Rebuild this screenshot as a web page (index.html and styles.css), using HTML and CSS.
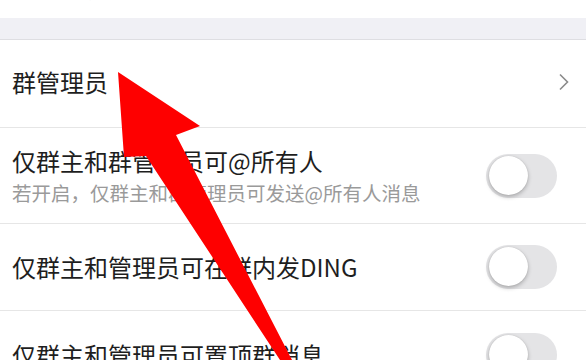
FILE: index.html
```html
<!DOCTYPE html>
<html lang="zh-CN">
<head>
<meta charset="utf-8">
<link rel="stylesheet" href="styles.css">
</head>
<body>
<div class="page">
  <div class="top"><span class="top-text">开启后，新成员入群可查看最近100条聊天记录</span></div>
  <div class="gap"></div>
  <div class="row row-1">
    <div class="title">群管理员</div>
    <svg class="chevron" width="12" height="18" viewBox="0 0 12 18"><path d="M2 1.5 L9.5 9 L2 16.5" fill="none" stroke="#8a8a8a" stroke-width="1.6"/></svg>
  </div>
  <div class="row row-2">
    <div class="texts">
      <div class="title">仅群主和群管理员可@所有人</div>
      <div class="sub">若开启，仅群主和群管理员可发送@所有人消息</div>
    </div>
    <div class="switch"><div class="knob"></div></div>
  </div>
  <div class="row row-3">
    <div class="title">仅群主和管理员可在群内发DING</div>
    <div class="switch"><div class="knob"></div></div>
  </div>
  <div class="row row-4">
    <div class="title">仅群主和管理员可置顶群消息</div>
    <div class="switch"><div class="knob"></div></div>
  </div>
  <svg class="arrow" width="586" height="360" viewBox="0 0 586 360">
    <polygon points="118,72 200,126 176,135 292,360 280,360 146,156 124,157" fill="#fe0000"/>
  </svg>
</div>
</body>
</html>
```
FILE: styles.css
```css
* { box-sizing: border-box; }
html, body { margin: 0; padding: 0; background: #fff; }
body { font-family: "Noto Sans CJK SC", "Noto Sans", sans-serif; }
.page { position: relative; width: 586px; height: 360px; overflow: hidden; background: #fff; }
.top { height: 18px; overflow: hidden; background: #fff; padding-left: 30px; }
.top-text { display: block; margin-top: -22px; font-size: 19px; line-height: 24px; color: #dcdcdc; white-space: nowrap; }
.gap { height: 22px; background: #f0f0f5; border-bottom: 1px solid #dedee2; }
.row { display: flex; align-items: center; justify-content: space-between; padding: 0 29px 0 12px; border-bottom: 1px solid #e6e6e6; }
.row-1 { height: 88px; padding-right: 16px; padding-bottom: 4px; }
.row-2 { height: 96px; }
.row-3 { height: 87px; }
.row-4 { height: 88px; border-bottom: none; }
.title { font-size: 24px; line-height: 32px; color: #1e1e1e; }
.sub { font-size: 19.5px; line-height: 28px; color: #9a9a9a; margin-top: 2px; }
.chevron { display: block; }
.switch { position: relative; width: 71px; height: 44px; border-radius: 22px; background: #e4e4e6; flex: none; }
.knob { position: absolute; left: 3px; top: 2px; width: 39px; height: 39px; border-radius: 50%; background: #fff; box-shadow: 0 2px 4px rgba(0,0,0,0.25), 0 0 1px rgba(0,0,0,0.2); }
.arrow { position: absolute; left: 0; top: 0; }
```
